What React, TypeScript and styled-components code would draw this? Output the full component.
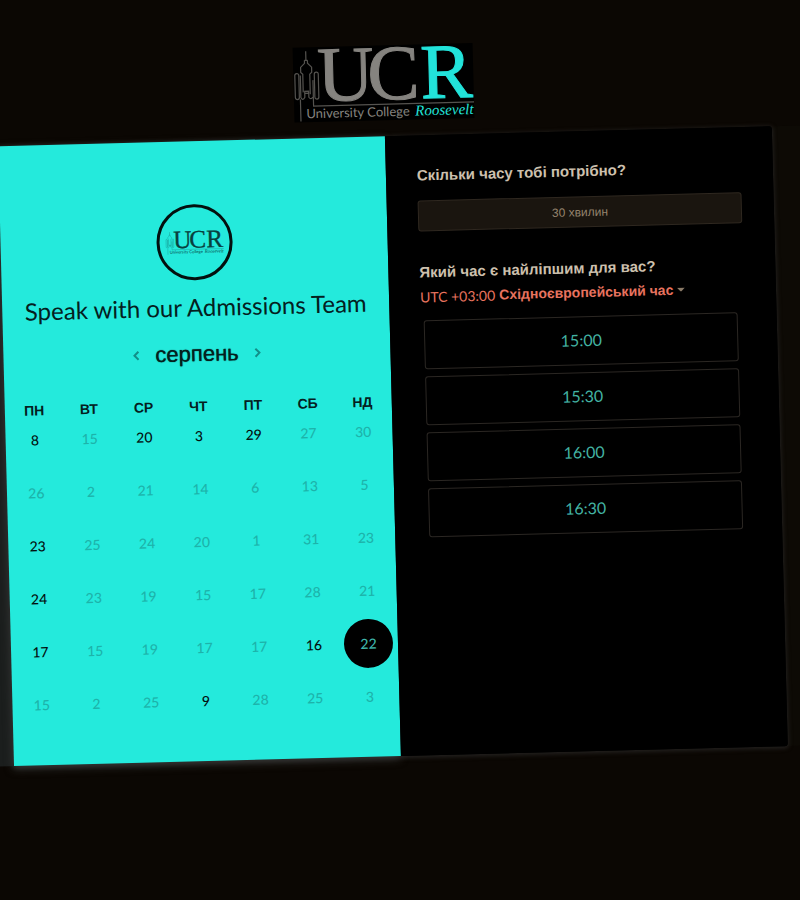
import React, { useState } from 'react';
import styled, { createGlobalStyle } from 'styled-components';

const GlobalStyle = createGlobalStyle`
  *, *::before, *::after { box-sizing: border-box; }
  html, body { margin: 0; background: #0b0703; }
  body { overflow: hidden; }
  button { font: inherit; color: inherit; }
`;

const sans = '"Liberation Sans", Arial, sans-serif';
const humanist = 'Lato, "Liberation Sans", sans-serif';
const serif = '"Liberation Serif", "Times New Roman", serif';
const cyan = '#24eadc';

const Page = styled.main`
  min-height: 100vh;
  padding: 45px 20px 0 6px;
  display: flex;
  flex-direction: column;
  align-items: center;
  font-family: ${sans};
  transform: rotate(-1.48deg);
`;

const BrandPlate = styled.div`
  width: 180px;
  height: 75px;
  background: #000;
`;

const LogoArt = styled.svg`
  display: block;
  overflow: visible;
`;

const Card = styled.div`
  width: 100%;
  margin-top: 16px;
  min-height: 620px;
  display: grid;
  grid-template-columns: 1fr 1fr;
  border-radius: 3px;
  background: #000;
  box-shadow: 0 1px 4px 1px #242220, 32px 0 0 #0d0a05;
`;

const CalendarPanel = styled.section`
  display: flex;
  flex-direction: column;
  align-items: center;
  padding-top: 63px;
  background: ${cyan};
  color: #04201e;
  box-shadow: -1px 3px 8px #343534, -16px 0 0 #1b1e1d;
`;

const Avatar = styled.div`
  width: 76px;
  height: 76px;
  display: grid;
  place-items: center;
  border: 3px solid #03100f;
  border-radius: 50%;
`;

const Title = styled.h1`
  margin: 11px 0 0;
  font-family: ${humanist};
  font-size: 24px;
  line-height: 32px;
  font-weight: 400;
  white-space: nowrap;
`;

const MonthBar = styled.div`
  display: flex;
  align-items: center;
  gap: 12px;
  margin-top: 15px;
  height: 32px;
`;

const MonthName = styled.h2`
  margin: 0;
  font-size: 22px;
  line-height: 32px;
  font-weight: 400;
  text-shadow: 0 0 1px currentColor;
`;

const ArrowButton = styled.button`
  display: grid;
  place-items: center;
  width: 14px;
  height: 24px;
  padding: 0;
  border: 0;
  background: none;
  color: #128f88;
  cursor: pointer;
`;

const Calendar = styled.table`
  width: calc(100% - 4px);
  margin-top: 32px;
  table-layout: fixed;
  border-collapse: collapse;
`;

const WeekDay = styled.th`
  height: 9px;
  padding: 0;
  font-size: 14px;
  line-height: 9px;
  font-weight: 700;
  text-align: center;
`;

const DayCell = styled.td`
  height: 53px;
  padding: 0;
  vertical-align: top;
`;

const Day = styled.button<{ $selected: boolean }>`
  display: block;
  width: 49px;
  height: 49px;
  margin: 0 auto;
  padding: 0;
  border: 0;
  border-radius: 50%;
  font-family: ${humanist};
  font-size: 14px;
  font-weight: 500;
  background: ${(p) => (p.$selected ? '#000' : 'none')};
  color: ${(p) => (p.$selected ? '#3fb5ab' : '#03100f')};
  cursor: pointer;
  &:disabled { color: #1db3aa; cursor: default; }
`;

const BookingPanel = styled.section`
  position: relative;
  padding: 28px 32px 0 31px;
  border-radius: 0 3px 3px 0;
  background: #000;
  color: #cdc0ae;
`;

const Question = styled.h3`
  margin: 0;
  font-size: 15px;
  line-height: 24px;
  font-weight: 700;
`;

const Duration = styled.button`
  display: block;
  width: 100%;
  height: 31px;
  margin: 13px 0 29px;
  padding: 0;
  border: 1px solid #2f2820;
  border-radius: 3px;
  background: #1a150f;
  color: #94836d;
  font-size: 12px;
  cursor: pointer;
`;

const Zone = styled.button`
  display: flex;
  align-items: center;
  height: 24px;
  padding: 0;
  border: 0;
  background: none;
  color: #e8735f;
  font-size: 14px;
  font-weight: 700;
  white-space: nowrap;
  cursor: pointer;
`;

const Offset = styled.span`
  margin-right: 4px;
  font-family: ${humanist};
  font-weight: 400;
`;

const Caret = styled.svg`
  margin-left: 4px;
`;

const Slots = styled.ul`
  display: flex;
  flex-direction: column;
  gap: 7px;
  margin: 12px 7px 0 3px;
  padding: 0;
  list-style: none;
`;

const Slot = styled.button`
  display: block;
  width: 100%;
  height: 49px;
  padding: 0 0 2px;
  border: 1px solid #2b2723;
  border-radius: 3px;
  background: #000;
  color: #43b3a3;
  font-family: ${humanist};
  font-size: 16px;
  cursor: pointer;
`;

type LogoProps = { width: number; main: string; accent: string; line: string };

const Logo = ({ width, main, accent, line }: LogoProps) => (
  <LogoArt width={width} viewBox="0 0 180 75" role="img" aria-label="University College Roosevelt">
    <g fill="none" stroke={line} strokeWidth="1.2">
      <path d="M13 4v9M11.500 13v3l-4 4v5l2 2v18M14.500 13v3l4 4v5l-2 2v20M11.500 13h3" />
      <rect x="1.500" y="26" width="4" height="26" rx="2" />
      <path d="M7 28v22q2 4 4 0v-4h4v4q2 3 4 0M11 46v-2h4v2" />
      <rect x="21" y="25" width="4" height="27" rx="2" />
      <path d="M6.500 52v22M19.500 33v26H180" />
    </g>
    <g fontFamily={serif} fontSize="78" strokeWidth="1">
      <text x="24" y="54" fill={main} stroke={main}>U</text>
      <text x="74" y="54" fill={main} stroke={main}>C</text>
      <text x="127" y="54" fill={accent} stroke={accent}>R</text>
    </g>
    <text x="12" y="71" fill={main} fontFamily={humanist} fontSize="13">University College</text>
    <text x="121" y="71" fill={accent} fontFamily={serif} fontStyle="italic" fontSize="15">Roosevelt</text>
  </LogoArt>
);

const weekDays = ['ПН', 'ВТ', 'СР', 'ЧТ', 'ПТ', 'СБ', 'НД'];
const weeks = [
  [8, 15, 20, 3, 29, 27, 30],
  [26, 2, 21, 14, 6, 13, 5],
  [23, 25, 24, 20, 1, 31, 23],
  [24, 23, 19, 15, 17, 28, 21],
  [17, 15, 19, 17, 17, 16, 22],
  [15, 2, 25, 9, 28, 25, 3],
];
const open = new Set(['0-0', '0-2', '0-3', '0-4', '2-0', '3-0', '4-0', '4-5', '4-6', '5-3']);
const times = ['15:00', '15:30', '16:00', '16:30'];

export default function App() {
  const [selected, setSelected] = useState('4-6');
  return (
    <>
      <GlobalStyle />
      <Page>
        <BrandPlate>
          <Logo width={180} main="#85837f" accent="#22e3da" line="#55534f" />
        </BrandPlate>
        <Card>
          <CalendarPanel>
            <Avatar>
              <Logo width={58} main="#08403e" accent="#08403e" line="#159089" />
            </Avatar>
            <Title>Speak with our Admissions Team</Title>
            <MonthBar>
              <ArrowButton aria-label="Попередній місяць">
                <svg width="8" height="12" viewBox="0 0 8 12" fill="none" stroke="currentColor" strokeWidth="2"><path d="M6 2 2 6l4 4" /></svg>
              </ArrowButton>
              <MonthName>серпень</MonthName>
              <ArrowButton aria-label="Наступний місяць">
                <svg width="8" height="12" viewBox="0 0 8 12" fill="none" stroke="currentColor" strokeWidth="2"><path d="m2 2 4 4-4 4" /></svg>
              </ArrowButton>
            </MonthBar>
            <Calendar>
              <thead>
                <tr>{weekDays.map((d) => <WeekDay key={d} scope="col">{d}</WeekDay>)}</tr>
              </thead>
              <tbody>
                {weeks.map((week, w) => (
                  <tr key={w}>
                    {week.map((n, d) => {
                      const id = `${w}-${d}`;
                      return (
                        <DayCell key={id}>
                          <Day $selected={id === selected} disabled={!open.has(id)} onClick={() => setSelected(id)}>{n}</Day>
                        </DayCell>
                      );
                    })}
                  </tr>
                ))}
              </tbody>
            </Calendar>
          </CalendarPanel>
          <BookingPanel>
            <Question>Скільки часу тобі потрібно?</Question>
            <Duration>30 хвилин</Duration>
            <Question>Який час є найліпшим для вас?</Question>
            <Zone>
              <Offset>UTC +03:00</Offset>Східноєвропейський час
              <Caret width="8" height="4" viewBox="0 0 8 4" fill="#8b7b68"><path d="M0 0h8L4 4z" /></Caret>
            </Zone>
            <Slots>
              {times.map((t) => <li key={t}><Slot>{t}</Slot></li>)}
            </Slots>
          </BookingPanel>
        </Card>
      </Page>
    </>
  );
}
